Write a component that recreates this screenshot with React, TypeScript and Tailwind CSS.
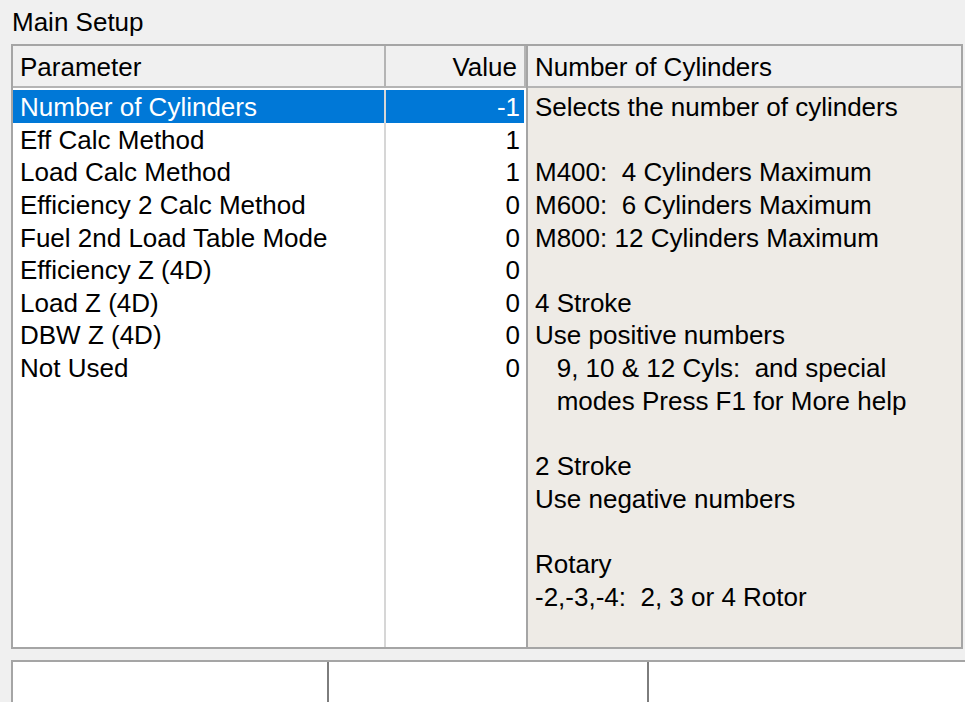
const rows: [string, string][] = [
  ['Number of Cylinders', '-1'],
  ['Eff Calc Method', '1'],
  ['Load Calc Method', '1'],
  ['Efficiency 2 Calc Method', '0'],
  ['Fuel 2nd Load Table Mode', '0'],
  ['Efficiency Z (4D)', '0'],
  ['Load Z (4D)', '0'],
  ['DBW Z (4D)', '0'],
  ['Not Used', '0'],
]

const help = [
  'Selects the number of cylinders',
  '',
  'M400:  4 Cylinders Maximum',
  'M600:  6 Cylinders Maximum',
  'M800: 12 Cylinders Maximum',
  '',
  '4 Stroke',
  'Use positive numbers',
  '   9, 10 & 12 Cyls:  and special',
  '   modes Press F1 for More help',
  '',
  '2 Stroke',
  'Use negative numbers',
  '',
  'Rotary',
  '-2,-3,-4:  2, 3 or 4 Rotor',
]

export default function App() {
  const selected = 0

  return (
    <div className="h-[702px] w-[965px] overflow-hidden bg-[#f0f0f0] text-[26px] text-black font-['Liberation_Sans',Arial,sans-serif]">
      {/* Title */}
      <div className="h-[44px] pl-[12px] pt-[6px] leading-[32px]">Main Setup</div>

      {/* Parameter list + help */}
      <div className="ml-[11px] flex h-[605px] w-[952px] border-2 border-[#a5a5a5] bg-white">
        <div className="flex w-[513px] flex-col">
          <div className="flex h-[42px] border-b-2 border-[#b4b4b4] bg-[#f0f0f0] leading-[42px]">
            <div className="w-[373px] border-r-2 border-[#b4b4b4] pl-[7px]">Parameter</div>
            <div className="flex-1 border-r-2 border-[#b4b4b4] pr-[7px] text-right">Value</div>
          </div>
          <div className="flex flex-1 pt-[2px]">
            <div className="w-[373px] border-r-2 border-[#d6d6d6]">
              {rows.map(([name], i) => (
                <div
                  key={name}
                  className={`h-[32.65px] pl-[7px] leading-[35px] whitespace-nowrap ${
                    i === selected ? 'bg-[#0078d7] text-white' : ''
                  }`}
                >
                  {name}
                </div>
              ))}
            </div>
            <div className="flex-1 pr-[2px]">
              {rows.map(([name, value], i) => (
                <div
                  key={name}
                  className={`h-[32.65px] pr-[4px] text-right leading-[35px] ${
                    i === selected ? 'bg-[#0078d7] text-white' : ''
                  }`}
                >
                  {value}
                </div>
              ))}
            </div>
          </div>
        </div>

        {/* Help pane */}
        <div className="flex flex-1 flex-col border-l-2 border-[#a5a5a5]">
          <div className="h-[42px] border-b-2 border-[#b4b4b4] bg-[#f0f0f0] pl-[7px] leading-[42px]">
            Number of Cylinders
          </div>
          <div className="flex-1 bg-[#eeebe6] pl-[7px] pt-[2px]">
            {help.map((line, i) => (
              <div key={i} className="h-[32.65px] whitespace-pre leading-[35px]">
                {line}
              </div>
            ))}
          </div>
        </div>
      </div>

      {/* Lower panel */}
      <div className="ml-[11px] mt-[11px] flex h-[60px] border-l-2 border-t-2 border-[#a5a5a5] bg-white">
        <div className="w-[316px] border-r-2 border-[#7d7d7d]" />
        <div className="w-[320px] border-r-2 border-[#7d7d7d]" />
        <div className="flex-1" />
      </div>
    </div>
  )
}
